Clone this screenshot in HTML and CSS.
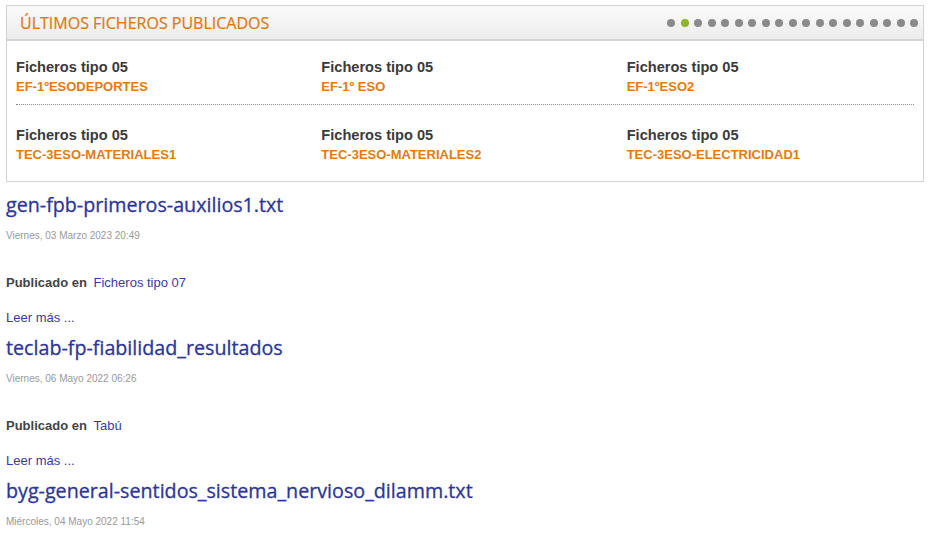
FILE: index.html
```html
<!DOCTYPE html>
<html lang="es">
<head>
<meta charset="utf-8">
<title>Últimos ficheros publicados</title>
<link rel="stylesheet" href="styles.css">
</head>
<body>
<section class="latest">
  <header class="latest-head">
    <h3 class="latest-title">ÚLTIMOS FICHEROS PUBLICADOS</h3>
    <div class="dots">
      <span class="dot"></span><span class="dot active"></span><span class="dot"></span><span class="dot"></span><span class="dot"></span><span class="dot"></span><span class="dot"></span><span class="dot"></span><span class="dot"></span><span class="dot"></span><span class="dot"></span><span class="dot"></span><span class="dot"></span><span class="dot"></span><span class="dot"></span><span class="dot"></span><span class="dot"></span><span class="dot"></span><span class="dot"></span>
    </div>
  </header>
  <div class="latest-body">
    <div class="row row-first">
      <div class="cell"><div class="cat">Ficheros tipo 05</div><a class="file" href="#">EF-1ºESODEPORTES</a></div>
      <div class="cell"><div class="cat">Ficheros tipo 05</div><a class="file" href="#">EF-1º ESO</a></div>
      <div class="cell"><div class="cat">Ficheros tipo 05</div><a class="file" href="#">EF-1ºESO2</a></div>
    </div>
    <div class="sep"></div>
    <div class="row row-second">
      <div class="cell"><div class="cat">Ficheros tipo 05</div><a class="file" href="#">TEC-3ESO-MATERIALES1</a></div>
      <div class="cell"><div class="cat">Ficheros tipo 05</div><a class="file" href="#">TEC-3ESO-MATERIALES2</a></div>
      <div class="cell"><div class="cat">Ficheros tipo 05</div><a class="file" href="#">TEC-3ESO-ELECTRICIDAD1</a></div>
    </div>
  </div>
</section>

<article class="post">
  <h2 class="post-title"><a href="#">gen-fpb-primeros-auxilios1.txt</a></h2>
  <div class="post-date">Viernes, 03 Marzo 2023 20:49</div>
  <div class="post-meta"><span class="meta-label">Publicado en</span> <a href="#" class="meta-link">Ficheros tipo 07</a></div>
  <a class="readmore" href="#">Leer más ...</a>
</article>

<article class="post">
  <h2 class="post-title"><a href="#">teclab-fp-fiabilidad_resultados</a></h2>
  <div class="post-date">Viernes, 06 Mayo 2022 06:26</div>
  <div class="post-meta"><span class="meta-label">Publicado en</span> <a href="#" class="meta-link">Tabú</a></div>
  <a class="readmore" href="#">Leer más ...</a>
</article>

<article class="post">
  <h2 class="post-title"><a href="#">byg-general-sentidos_sistema_nervioso_dilamm.txt</a></h2>
  <div class="post-date">Miércoles, 04 Mayo 2022 11:54</div>
</article>
</body>
</html>
```

FILE: styles.css
```css
html, body {
  margin: 0;
  padding: 0;
  background: #fff;
}
body {
  padding: 5px 6px 0 6px;
  font-family: "Liberation Sans", Arial, sans-serif;
  color: #444;
}
a { text-decoration: none; }

.latest {
  border: 1px solid #d2d2d2;
}
.latest-head {
  height: 33px;
  display: flex;
  align-items: center;
  justify-content: space-between;
  padding: 0 5px 0 13px;
  background: linear-gradient(#fbfbfb, #ececec);
  border-bottom: 2px solid #d4d4d4;
}
.latest-title {
  margin: 0;
  font-family: "Open Sans", sans-serif;
  font-weight: 400;
  font-size: 16px;
  color: #e0780f;
  -webkit-text-stroke: 0.2px #e0780f;
}
.dots {
  display: flex;
  gap: 5.5px;
  padding-top: 1px;
}
.dot {
  width: 8px;
  height: 8px;
  border-radius: 50%;
  background: #8a8a8a;
}
.dot.active {
  background: #8db527;
}

.latest-body {
  padding: 17px 0 17px;
}
.row {
  display: grid;
  grid-template-columns: repeat(3, 1fr);
}
.row-second {
  padding-top: 21px;
}
.cell {
  padding-left: 9px;
  line-height: 19px;
}
.cat {
  font-size: 14.6px;
  font-weight: 700;
  color: #3a3a3a;
}
.file {
  display: block;
  font-size: 13px;
  font-weight: 700;
  color: #e37b10;
}
.sep {
  margin: 8px 9px 0;
  border-top: 1px dotted #8c8c8c;
}

.post-title {
  margin: 10px 0 0;
  font-family: "Open Sans", sans-serif;
  font-weight: 400;
  font-size: 19.7px;
  line-height: 26px;
}
.post-title a {
  color: #2d3596;
  -webkit-text-stroke: 0.3px #2d3596;
}
.post-date {
  margin-top: 12px;
  font-size: 10px;
  line-height: 12px;
  color: #999;
}
.post-meta {
  margin-top: 32px;
  font-size: 13px;
  line-height: 18px;
}
.meta-label {
  font-weight: 700;
  color: #444;
}
.meta-link {
  margin-left: 3px;
  font-size: 13px;
  color: #3a3a9e;
}
.readmore {
  display: block;
  margin-top: 17px;
  font-size: 13px;
  line-height: 18px;
  color: #3a3a9e;
}
.post + .post .post-title {
  margin-top: 8px;
}
```
